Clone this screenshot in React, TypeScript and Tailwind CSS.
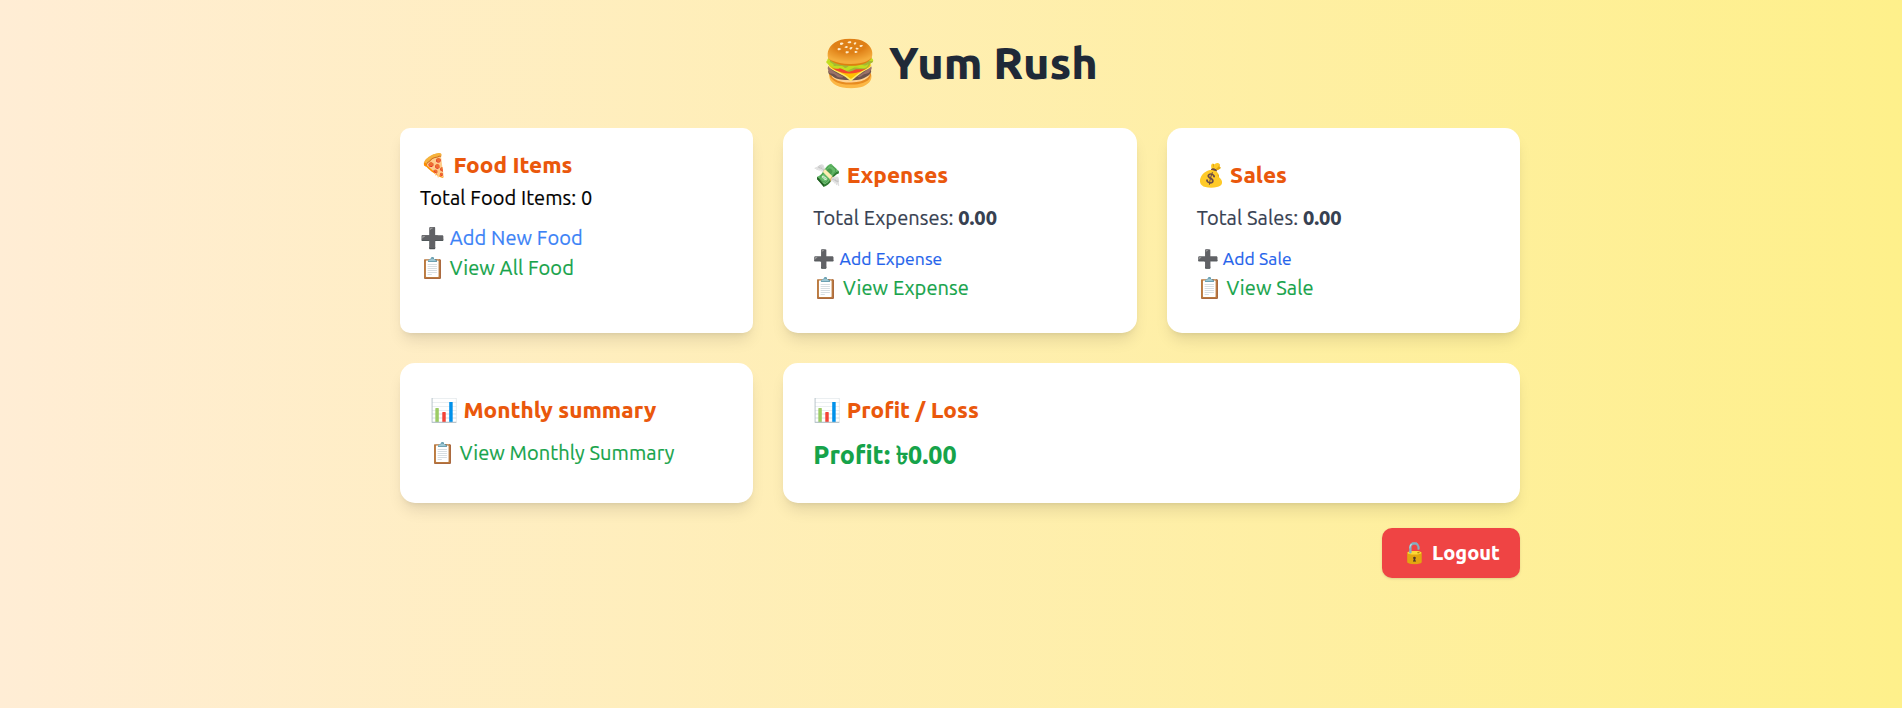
import type { ReactNode } from "react";

function Heading({ children }: { children: ReactNode }) {
  return <h2 className="mb-[10px] pb-[2px] text-[22.5px] leading-[33px] font-extrabold tracking-normal text-[#ea580c] [-webkit-text-stroke:0]">{children}</h2>;
}

function Card({ children, className = "" }: { children: ReactNode; className?: string }) {
  return <section className={`rounded-[15px] bg-white p-[30px] shadow-lg ${className}`}>{children}</section>;
}

function TotalsCard({ icon, title, item }: { icon: string; title: string; item: string }) {
  return (
    <Card>
      <Heading>{icon} {title}</Heading>
      <p className="text-[#374151]">
        Total {title}: <span className="font-extrabold tracking-normal [-webkit-text-stroke:0]">0.00</span>
      </p>
      <div className="mt-[10px] flex flex-col">
        <a href="#" className="h-[30px] text-[17.5px] leading-[32px] text-[#2563eb]">➕ Add {item}</a>
        <a href="#" className="text-[#16a34a]">📋 View {item}</a>
      </div>
    </Card>
  );
}

export default function App() {
  return (
    <div className="overflow-hidden">
      <div className="min-h-screen w-[1920px] bg-[linear-gradient(to_right,#ffedd5,#fef08a)] pt-[38px] font-['Ubuntu','Noto_Sans',sans-serif] text-[20px] leading-[30px] tracking-[0.09px] text-black [-webkit-text-stroke:0.2px]">
        <main className="mx-auto w-[1120px]">
          <h1 className="mb-[40px] text-center text-[45px] leading-[50px] font-extrabold tracking-normal text-[#1f2937] [-webkit-text-stroke:0]">🍔 Yum Rush</h1>
          <div className="grid grid-cols-3 gap-[30px]">
            <section className="rounded-[10px] bg-white p-[20px] shadow-lg">
              <h2 className="pb-[2px] text-[22.5px] leading-[33px] font-extrabold tracking-normal text-[#ea580c] [-webkit-text-stroke:0]">🍕 Food Items</h2>
              <p>Total Food Items: 0</p>
              <div className="mt-[10px] flex flex-col">
                <a href="#" className="text-[#3b82f6]">➕ Add New Food</a>
                <a href="#" className="text-[#16a34a]">📋 View All Food</a>
              </div>
            </section>
            <TotalsCard icon="💸" title="Expenses" item="Expense" />
            <TotalsCard icon="💰" title="Sales" item="Sale" />
            <Card>
              <Heading>📊 Monthly summary</Heading>
              <a href="#" className="block text-[#16a34a]">📋 View Monthly Summary</a>
            </Card>
            <Card className="col-span-2">
              <Heading>📊 Profit / Loss</Heading>
              <p className="text-[25px] leading-[35px] font-extrabold tracking-normal text-[#16a34a] [-webkit-text-stroke:0]">Profit: ৳0.00</p>
            </Card>
          </div>
          <div className="mt-[25px] flex justify-end">
            <button className="rounded-[10px] bg-[#ef4444] px-[20px] py-[10px] font-extrabold tracking-normal text-white shadow-sm [-webkit-text-stroke:0]">🔓 Logout</button>
          </div>
        </main>
      </div>
    </div>
  );
}
